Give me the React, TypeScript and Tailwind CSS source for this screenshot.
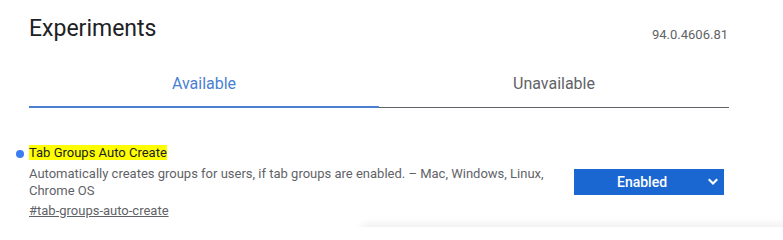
import React from "react";

const Chevron = () => (
    <svg viewBox="0 0 10 8" className="w-[10px] h-[8px]" fill="none">
        <path d="M1.5 2l3.5 3.5L8.5 2" stroke="white" strokeWidth="2.2" strokeLinecap="square" />
    </svg>
);

export default function App() {
    return (
        <div className="relative w-[783px] h-[227px] overflow-hidden bg-white font-['Roboto',sans-serif]">
            <div className="flex items-end justify-between pl-[29px] pr-[55px] pt-[16px]">
                <h1 className="text-[23px] leading-[26px] text-[#202124]">Experiments</h1>
                <span className="text-[13px] leading-[16px] text-[#5f6368] -mb-[1px]">94.0.4606.81</span>
            </div>

            <div className="ml-[29px] mt-[28px] grid w-[700px] grid-cols-2">
                <div className="h-[38px] border-b-2 border-[#4a7fd2] pt-[2px] text-center text-[16px] text-[#4a7fd2]">
                    Available
                </div>
                <div className="h-[38px] border-b border-[#5f6368] pt-[2px] text-center text-[16px] text-[#5f6368]">
                    Unavailable
                </div>
            </div>

            <div className="mt-[36px] flex items-start pl-[29px]">
                <div className="relative w-[525px]">
                    <span className="absolute left-[-13px] top-[6px] h-[8px] w-[8px] rounded-full bg-[#3b7cf0]" />
                    <div className="text-[13px] leading-[18px]">
                        <span className="bg-[#ffff00] text-[#202124]">Tab Groups Auto Create</span>
                    </div>
                    <p className="mt-[3px] text-[13px] leading-[17px] text-[#5f6368]">
                        Automatically creates groups for users, if tab groups are enabled. – Mac, Windows, Linux, Chrome OS
                    </p>
                    <a className="mt-[4px] block text-[13px] leading-[16px] text-[#5f6368] underline">#tab-groups-auto-create</a>
                </div>
                <div className="ml-[20px] mt-[25px] flex h-[26px] w-[150px] items-center bg-[#1a67d2] pl-[43px] pr-[6px] text-white">
                    <span className="flex-1 text-[14px] font-medium">Enabled</span>
                    <Chevron />
                </div>
            </div>

            <div className="absolute left-[360px] right-[-20px] top-[227px] h-[40px] rounded-[8px] shadow-[0_-3px_8px_rgba(0,0,0,0.07)]" />
        </div>
    );
}
